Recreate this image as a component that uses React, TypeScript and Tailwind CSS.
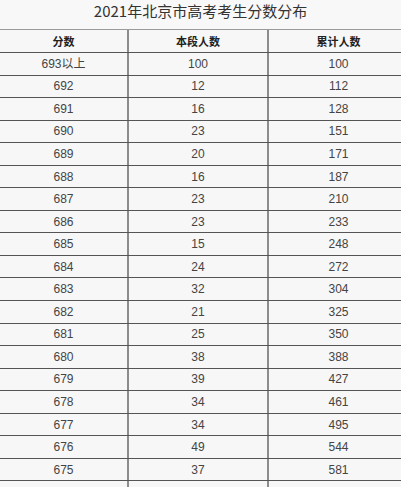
import React from "react";

const rows: [string, string, string][] = [
  ["693以上", "100", "100"],
  ["692", "12", "112"],
  ["691", "16", "128"],
  ["690", "23", "151"],
  ["689", "20", "171"],
  ["688", "16", "187"],
  ["687", "23", "210"],
  ["686", "23", "233"],
  ["685", "15", "248"],
  ["684", "24", "272"],
  ["683", "32", "304"],
  ["682", "21", "325"],
  ["681", "25", "350"],
  ["680", "38", "388"],
  ["679", "39", "427"],
  ["678", "34", "461"],
  ["677", "34", "495"],
  ["676", "49", "544"],
  ["675", "37", "581"],
  ["", "", ""],
];

export default function App() {
  return (
    <div className="w-[401px] h-[487px] overflow-hidden bg-[#f8f8f8]">
      <div className="h-[29px] flex items-center justify-center pb-[9px] pt-[1px] text-[15px] leading-none text-[#333] [font-family:'Noto_Sans_CJK_SC',sans-serif]">
        2021年北京市高考考生分数分布
      </div>
      <div className="w-[408px] border-t border-[#9a9a9a] bg-[#f7f7f7]">
        <div className="flex h-[23px] border-b border-[#555] text-[11px] font-bold text-[#222] [font-family:'Noto_Sans_CJK_SC',sans-serif]">
          <div className="w-[127px] shrink-0 flex items-center justify-center">分数</div>
          <div className="w-[140px] shrink-0 border-l-2 border-[#8c8c8c] flex items-center justify-center">本段人数</div>
          <div className="w-[141px] shrink-0 border-l-2 border-[#8c8c8c] flex items-center justify-center">累计人数</div>
        </div>
        {rows.map((r, i) => (
          <div
            key={i}
            className="flex h-[22.56px] border-b border-[#555] text-[12px] text-[#444] [font-family:'Liberation_Sans','Noto_Sans_CJK_SC',sans-serif]"
          >
            <div className="w-[127px] shrink-0 flex items-center justify-center">{r[0]}</div>
            <div className="w-[140px] shrink-0 border-l-2 border-[#8c8c8c] flex items-center justify-center">{r[1]}</div>
            <div className="w-[141px] shrink-0 border-l-2 border-[#8c8c8c] flex items-center justify-center">{r[2]}</div>
          </div>
        ))}
      </div>
    </div>
  );
}
